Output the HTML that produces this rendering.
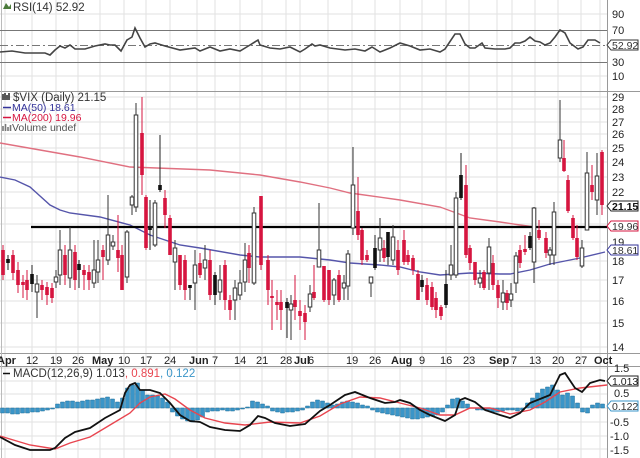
<!DOCTYPE html>
<html><head><meta charset="utf-8"><style>
html,body{margin:0;padding:0;background:#fff}
svg{display:block;font-family:"Liberation Sans",sans-serif}
.g line{stroke:#e2e2e2;stroke-width:1}
.ax{font-size:11px;fill:#222}
.r line{stroke:#d6153f;stroke-width:1}
.r rect{fill:#d6153f}
.w line{stroke:#333;stroke-width:1}
.w rect{fill:#fff;stroke:#333;stroke-width:1}
.b line{stroke:#222;stroke-width:1}
.b rect{fill:#111}
</style></head><body>
<svg width="640" height="458" viewBox="0 0 640 458" xmlns="http://www.w3.org/2000/svg">
<rect width="640" height="458" fill="#fff"/>
<!-- vertical grid -->
<g class="g">
<line x1="5" y1="0" x2="5" y2="458"/><line x1="32" y1="0" x2="32" y2="458"/><line x1="56" y1="0" x2="56" y2="458"/><line x1="78" y1="0" x2="78" y2="458"/><line x1="100" y1="0" x2="100" y2="458"/><line x1="124" y1="0" x2="124" y2="458"/><line x1="146" y1="0" x2="146" y2="458"/><line x1="170" y1="0" x2="170" y2="458"/><line x1="197" y1="0" x2="197" y2="458"/><line x1="215" y1="0" x2="215" y2="458"/><line x1="240" y1="0" x2="240" y2="458"/><line x1="262" y1="0" x2="262" y2="458"/><line x1="286" y1="0" x2="286" y2="458"/><line x1="300" y1="0" x2="300" y2="458"/><line x1="328" y1="0" x2="328" y2="458"/><line x1="352" y1="0" x2="352" y2="458"/><line x1="375" y1="0" x2="375" y2="458"/><line x1="400" y1="0" x2="400" y2="458"/><line x1="422" y1="0" x2="422" y2="458"/><line x1="446" y1="0" x2="446" y2="458"/><line x1="469" y1="0" x2="469" y2="458"/><line x1="497" y1="0" x2="497" y2="458"/><line x1="512" y1="0" x2="512" y2="458"/><line x1="535" y1="0" x2="535" y2="458"/><line x1="558" y1="0" x2="558" y2="458"/><line x1="581" y1="0" x2="581" y2="458"/><line x1="600" y1="0" x2="600" y2="458"/>
<!-- horizontal grid RSI -->
<line x1="0" y1="14" x2="607" y2="14"/><line x1="0" y1="76" x2="607" y2="76"/>
<!-- price -->
<line x1="0" y1="97" x2="607" y2="97"/><line x1="0" y1="109" x2="607" y2="109"/><line x1="0" y1="122" x2="607" y2="122"/><line x1="0" y1="134" x2="607" y2="134"/><line x1="0" y1="148" x2="607" y2="148"/><line x1="0" y1="162" x2="607" y2="162"/><line x1="0" y1="177" x2="607" y2="177"/><line x1="0" y1="192" x2="607" y2="192"/><line x1="0" y1="208" x2="607" y2="208"/><line x1="0" y1="224" x2="607" y2="224"/><line x1="0" y1="242" x2="607" y2="242"/><line x1="0" y1="261" x2="607" y2="261"/><line x1="0" y1="280" x2="607" y2="280"/><line x1="0" y1="301" x2="607" y2="301"/><line x1="0" y1="323" x2="607" y2="323"/><line x1="0" y1="347" x2="607" y2="347"/>
<!-- macd -->
<line x1="0" y1="368" x2="607" y2="368"/><line x1="0" y1="381" x2="607" y2="381"/><line x1="0" y1="394" x2="607" y2="394"/><line x1="0" y1="408" x2="607" y2="408"/><line x1="0" y1="422" x2="607" y2="422"/><line x1="0" y1="436" x2="607" y2="436"/><line x1="0" y1="449" x2="607" y2="449"/>
</g>
<!-- panel separators -->
<g stroke="#999" stroke-width="1">
<line x1="0" y1="91.5" x2="640" y2="91.5"/>
<line x1="0" y1="353.5" x2="640" y2="353.5"/>
<line x1="0" y1="366.5" x2="640" y2="366.5"/>
<line x1="607.5" y1="0" x2="607.5" y2="458"/>
<line x1="1.5" y1="0" x2="1.5" y2="458" stroke="#bbb"/>
</g>
<!-- RSI -->
<g stroke="#777" stroke-width="1">
<line x1="0" y1="30.5" x2="607" y2="30.5"/>
<line x1="0" y1="62.5" x2="607" y2="62.5"/>
<line x1="0" y1="45.5" x2="607" y2="45.5" stroke-dasharray="8,3,2,3"/>
</g>
<polyline fill="none" stroke="#444" stroke-width="1.6" points="0,52 12,51 25,53 45,53 50,55 55,50 60,46 65,48 70,45 75,49 85,49 95,46 105,44 110,45 115,45 121,51 127,40 132,37 135,28 140,38 145,47 150,44 155,43 165,46 180,50 195,48 200,51 210,47 220,51 230,49 240,51 250,45 258,40 260,45 270,48 280,49 290,47 300,52 305,49 312,44 315,46 320,45 330,48 345,50 355,49 365,51 372,47 380,52 390,48 400,43 410,46 420,50 430,49 440,52 445,49 455,34 460,34 465,44 470,48 475,48 482,43 485,48 495,49 505,49 510,48 515,43 520,43 525,41 530,37 535,41 540,42 545,45 550,43 555,37 560,30 565,33 570,43 578,49 583,47 588,40 595,40 600,43"/>
<g fill="#333" font-size="11" font-family="Liberation Sans,sans-serif">
<path d="M3 9 L6 3 L9 7 L11 4 V9 Z" fill="#4a7a3a"/>
<text x="13" y="11" font-size="11.5">RSI(14) 52.92</text>
</g>
<g class="ax">
<text x="612" y="18">90</text><text x="612" y="34">70</text><text x="612" y="66">30</text><text x="612" y="80">10</text>
</g>
<path d="M607 45 L611 40 H638 V50 H611 Z" fill="#fff" stroke="#333"/>
<text x="612" y="49" font-size="10.5" fill="#333">52.92</text>

<!-- MAs -->
<polyline fill="none" stroke="#e07080" stroke-width="1.4" points="0,143 40,150 80,157 130,167 210,170 260,175 300,182 330,188 350,193 400,200 440,207 470,218 500,222 520,225 535,227"/>
<polyline fill="none" stroke="#5555aa" stroke-width="1.4" points="0,177 15,180 30,187 40,196 50,205 60,210 70,213 100,217 130,225 150,235 165,240 180,245 200,248 240,255 260,257 300,257 330,260 350,263 380,265 400,267 420,272 440,275 470,273 500,274 510,274 530,270 550,264 580,258 605,252"/>
<!-- horizontal black line -->
<line x1="31" y1="227" x2="607" y2="227" stroke="#000" stroke-width="2.2"/>

<!-- candles -->
<g class="r">
<line x1="3" y1="245" x2="3" y2="280"/><rect x="1.2" y="250" width="3.6" height="25"/>
<line x1="13" y1="250" x2="13" y2="280"/><rect x="11.2" y="255" width="3.6" height="18"/>
<line x1="18" y1="262" x2="18" y2="293"/><rect x="16.2" y="270" width="3.6" height="15"/>
<line x1="23" y1="275" x2="23" y2="298"/><rect x="21.2" y="282" width="3.6" height="3"/>
<line x1="27" y1="270" x2="27" y2="300"/><rect x="25.2" y="280" width="3.6" height="10"/>
<line x1="42" y1="280" x2="42" y2="300"/><rect x="40.2" y="285" width="3.6" height="5"/>
<line x1="47" y1="282" x2="47" y2="305"/><rect x="45.2" y="287" width="3.6" height="8"/>
<line x1="52" y1="283" x2="52" y2="303"/><rect x="50.2" y="288" width="3.6" height="10"/>
<line x1="65" y1="245" x2="65" y2="285"/><rect x="63.2" y="255" width="3.6" height="20"/>
<line x1="75" y1="245" x2="75" y2="290"/><rect x="73.2" y="252" width="3.6" height="28"/>
<line x1="84" y1="265" x2="84" y2="290"/><rect x="82.2" y="270" width="3.6" height="5"/>
<line x1="89" y1="265" x2="89" y2="290"/><rect x="87.2" y="272" width="3.6" height="8"/>
<line x1="103" y1="245" x2="103" y2="280"/><rect x="101.2" y="250" width="3.6" height="7"/>
<line x1="118" y1="215" x2="118" y2="272"/><rect x="116.2" y="250" width="3.6" height="8"/>
<line x1="122" y1="245" x2="122" y2="290"/><rect x="120.2" y="255" width="3.6" height="35"/>
<line x1="142" y1="97" x2="142" y2="195"/><rect x="140.2" y="133" width="3.6" height="42"/>
<line x1="146" y1="195" x2="146" y2="250"/><rect x="144.2" y="197" width="3.6" height="51"/>
<line x1="165" y1="190" x2="165" y2="228"/><rect x="163.2" y="198" width="3.6" height="17"/>
<line x1="170" y1="215" x2="170" y2="255"/><rect x="168.2" y="218" width="3.6" height="37"/>
<line x1="180" y1="255" x2="180" y2="290"/><rect x="178.2" y="255" width="3.6" height="30"/>
<line x1="185" y1="255" x2="185" y2="300"/><rect x="183.2" y="260" width="3.6" height="30"/>
<line x1="200" y1="253" x2="200" y2="278"/><rect x="198.2" y="263" width="3.6" height="12"/>
<line x1="210" y1="250" x2="210" y2="300"/><rect x="208.2" y="260" width="3.6" height="35"/>
<line x1="225" y1="260" x2="225" y2="310"/><rect x="223.2" y="265" width="3.6" height="35"/>
<line x1="230" y1="295" x2="230" y2="320"/><rect x="228.2" y="300" width="3.6" height="10"/>
<line x1="249" y1="245" x2="249" y2="283"/><rect x="247.2" y="253" width="3.6" height="15"/>
<line x1="261" y1="196" x2="261" y2="270"/><rect x="259.2" y="196" width="3.6" height="69"/>
<line x1="268" y1="255" x2="268" y2="305"/><rect x="266.2" y="260" width="3.6" height="30"/>
<line x1="272" y1="280" x2="272" y2="330"/><rect x="270.2" y="296" width="3.6" height="2"/>
<line x1="277" y1="290" x2="277" y2="320"/><rect x="275.2" y="302" width="3.6" height="3"/>
<line x1="281" y1="290" x2="281" y2="330"/><rect x="279.2" y="302" width="3.6" height="8"/>
<line x1="295" y1="275" x2="295" y2="320"/><rect x="293.2" y="300" width="3.6" height="7"/>
<line x1="300" y1="300" x2="300" y2="330"/><rect x="298.2" y="311" width="3.6" height="5"/>
<line x1="305" y1="305" x2="305" y2="340"/><rect x="303.2" y="313" width="3.6" height="9"/>
<line x1="314" y1="265" x2="314" y2="300"/><rect x="312.2" y="292" width="3.6" height="6"/>
<line x1="324" y1="266" x2="324" y2="302"/><rect x="322.2" y="266" width="3.6" height="34"/>
<line x1="329" y1="270" x2="329" y2="305"/><rect x="327.2" y="270" width="3.6" height="30"/>
<line x1="339" y1="270" x2="339" y2="302"/><rect x="337.2" y="275" width="3.6" height="25"/>
<line x1="358" y1="177" x2="358" y2="240"/><rect x="356.2" y="211" width="3.6" height="24"/>
<line x1="362" y1="228" x2="362" y2="265"/><rect x="360.2" y="230" width="3.6" height="30"/>
<line x1="367" y1="250" x2="367" y2="262"/><rect x="365.2" y="255" width="3.6" height="5"/>
<line x1="384" y1="240" x2="384" y2="262"/><rect x="382.2" y="248" width="3.6" height="10"/>
<line x1="398" y1="240" x2="398" y2="275"/><rect x="396.2" y="250" width="3.6" height="20"/>
<line x1="404" y1="230" x2="404" y2="265"/><rect x="402.2" y="240" width="3.6" height="22"/>
<line x1="408" y1="250" x2="408" y2="265"/><rect x="406.2" y="255" width="3.6" height="7"/>
<line x1="413" y1="255" x2="413" y2="275"/><rect x="411.2" y="258" width="3.6" height="12"/>
<line x1="418" y1="270" x2="418" y2="300"/><rect x="416.2" y="274" width="3.6" height="26"/>
<line x1="427" y1="278" x2="427" y2="305"/><rect x="425.2" y="285" width="3.6" height="15"/>
<line x1="432" y1="282" x2="432" y2="310"/><rect x="430.2" y="287" width="3.6" height="20"/>
<line x1="436" y1="292" x2="436" y2="318"/><rect x="434.2" y="298" width="3.6" height="12"/>
<line x1="441" y1="305" x2="441" y2="320"/><rect x="439.2" y="307" width="3.6" height="9"/>
<line x1="466" y1="165" x2="466" y2="258"/><rect x="464.2" y="185" width="3.6" height="70"/>
<line x1="470" y1="245" x2="470" y2="270"/><rect x="468.2" y="248" width="3.6" height="15"/>
<line x1="475" y1="262" x2="475" y2="285"/><rect x="473.2" y="262" width="3.6" height="18"/>
<line x1="484" y1="270" x2="484" y2="290"/><rect x="482.2" y="272" width="3.6" height="16"/>
<line x1="493" y1="255" x2="493" y2="290"/><rect x="491.2" y="263" width="3.6" height="22"/>
<line x1="498" y1="280" x2="498" y2="308"/><rect x="496.2" y="285" width="3.6" height="13"/>
<line x1="507" y1="290" x2="507" y2="310"/><rect x="505.2" y="293" width="3.6" height="10"/>
<line x1="520" y1="245" x2="520" y2="268"/><rect x="518.2" y="250" width="3.6" height="13"/>
<line x1="525" y1="235" x2="525" y2="255"/><rect x="523.2" y="249" width="3.6" height="3"/>
<line x1="539" y1="220" x2="539" y2="240"/><rect x="537.2" y="230" width="3.6" height="8"/>
<line x1="546" y1="232" x2="546" y2="258"/><rect x="544.2" y="238" width="3.6" height="15"/>
<line x1="564" y1="140" x2="564" y2="172"/><rect x="562.2" y="158" width="3.6" height="13"/>
<line x1="568" y1="175" x2="568" y2="213"/><rect x="566.2" y="180" width="3.6" height="31"/>
<line x1="573" y1="215" x2="573" y2="240"/><rect x="571.2" y="218" width="3.6" height="20"/>
<line x1="577" y1="225" x2="577" y2="260"/><rect x="575.2" y="238" width="3.6" height="19"/>
<line x1="592" y1="165" x2="592" y2="200"/><rect x="590.2" y="185" width="3.6" height="7"/>
<line x1="602" y1="150" x2="602" y2="215"/><rect x="600.2" y="152" width="3.6" height="53"/>
</g>
<g class="w">
<line x1="37" y1="275" x2="37" y2="318"/><rect x="35.2" y="284" width="3.6" height="8"/>
<line x1="56" y1="270" x2="56" y2="288"/><rect x="54.2" y="277" width="3.6" height="5"/>
<line x1="60" y1="230" x2="60" y2="285"/><rect x="58.2" y="250" width="3.6" height="25"/>
<line x1="70" y1="227" x2="70" y2="288"/><rect x="68.2" y="250" width="3.6" height="28"/>
<line x1="94" y1="240" x2="94" y2="288"/><rect x="92.2" y="270" width="3.6" height="13"/>
<line x1="98" y1="240" x2="98" y2="283"/><rect x="96.2" y="260" width="3.6" height="12"/>
<line x1="108" y1="195" x2="108" y2="265"/><rect x="106.2" y="235" width="3.6" height="25"/>
<line x1="113" y1="235" x2="113" y2="250"/><rect x="111.2" y="242" width="3.6" height="4"/>
<line x1="127" y1="230" x2="127" y2="283"/><rect x="125.2" y="232" width="3.6" height="45"/>
<line x1="132" y1="195" x2="132" y2="215"/><rect x="130.2" y="197" width="3.6" height="8"/>
<line x1="136" y1="103" x2="136" y2="212"/><rect x="134.2" y="115" width="3.6" height="92"/>
<line x1="155" y1="200" x2="155" y2="247"/><rect x="153.2" y="203" width="3.6" height="42"/>
<line x1="175" y1="240" x2="175" y2="290"/><rect x="173.2" y="248" width="3.6" height="14"/>
<line x1="195" y1="250" x2="195" y2="310"/><rect x="193.2" y="265" width="3.6" height="18"/>
<line x1="205" y1="245" x2="205" y2="280"/><rect x="203.2" y="260" width="3.6" height="8"/>
<line x1="220" y1="265" x2="220" y2="300"/><rect x="218.2" y="280" width="3.6" height="12"/>
<line x1="235" y1="280" x2="235" y2="320"/><rect x="233.2" y="288" width="3.6" height="12"/>
<line x1="240" y1="270" x2="240" y2="300"/><rect x="238.2" y="283" width="3.6" height="12"/>
<line x1="245" y1="243" x2="245" y2="292"/><rect x="243.2" y="260" width="3.6" height="22"/>
<line x1="254" y1="207" x2="254" y2="285"/><rect x="252.2" y="213" width="3.6" height="70"/>
<line x1="291" y1="295" x2="291" y2="340"/><rect x="289.2" y="304" width="3.6" height="6"/>
<line x1="310" y1="285" x2="310" y2="312"/><rect x="308.2" y="294" width="3.6" height="13"/>
<line x1="319" y1="203" x2="319" y2="267"/><rect x="317.2" y="250" width="3.6" height="17"/>
<line x1="334" y1="278" x2="334" y2="305"/><rect x="332.2" y="280" width="3.6" height="15"/>
<line x1="344" y1="275" x2="344" y2="300"/><rect x="342.2" y="283" width="3.6" height="5"/>
<line x1="348" y1="250" x2="348" y2="300"/><rect x="346.2" y="254" width="3.6" height="32"/>
<line x1="353" y1="147" x2="353" y2="235"/><rect x="351.2" y="185" width="3.6" height="43"/>
<line x1="371" y1="277" x2="371" y2="297" stroke="#d6153f"/><rect x="369.2" y="277" width="3.6" height="6" stroke="#d6153f"/>
<line x1="380" y1="218" x2="380" y2="262"/><rect x="378.2" y="238" width="3.6" height="12"/>
<line x1="393" y1="225" x2="393" y2="265"/><rect x="391.2" y="237" width="3.6" height="23"/>
<line x1="451" y1="245" x2="451" y2="280"/><rect x="449.2" y="265" width="3.6" height="10"/>
<line x1="456" y1="192" x2="456" y2="278"/><rect x="454.2" y="198" width="3.6" height="77"/>
<line x1="480" y1="270" x2="480" y2="288"/><rect x="478.2" y="278" width="3.6" height="5"/>
<line x1="489" y1="238" x2="489" y2="290"/><rect x="487.2" y="247" width="3.6" height="26"/>
<line x1="503" y1="280" x2="503" y2="310"/><rect x="501.2" y="293" width="3.6" height="9"/>
<line x1="511" y1="283" x2="511" y2="307"/><rect x="509.2" y="294" width="3.6" height="6"/>
<line x1="516" y1="252" x2="516" y2="293"/><rect x="514.2" y="256" width="3.6" height="27"/>
<line x1="534" y1="207" x2="534" y2="283"/><rect x="532.2" y="208" width="3.6" height="54"/>
<line x1="550" y1="247" x2="550" y2="265"/><rect x="548.2" y="250" width="3.6" height="5"/>
<line x1="554" y1="202" x2="554" y2="265"/><rect x="552.2" y="212" width="3.6" height="43"/>
<line x1="560" y1="100" x2="560" y2="162"/><rect x="558.2" y="140" width="3.6" height="18"/>
<line x1="582" y1="240" x2="582" y2="268"/><rect x="580.2" y="248" width="3.6" height="18"/>
<line x1="587" y1="152" x2="587" y2="230"/><rect x="585.2" y="173" width="3.6" height="57"/>
<line x1="597" y1="153" x2="597" y2="215"/><rect x="595.2" y="176" width="3.6" height="24"/>
</g>
<g class="b">
<line x1="8" y1="255" x2="8" y2="270"/><rect x="6.2" y="259" width="3.6" height="4"/>
<line x1="32" y1="265" x2="32" y2="292"/><rect x="30.2" y="274" width="3.6" height="10"/>
<line x1="79" y1="260" x2="79" y2="288"/><rect x="77.2" y="264" width="3.6" height="6"/>
<line x1="150" y1="200" x2="150" y2="250"/><rect x="148.2" y="226" width="3.6" height="4"/>
<line x1="160" y1="135" x2="160" y2="192"/><rect x="158.2" y="185" width="3.6" height="5"/>
<line x1="190" y1="285" x2="190" y2="300"/><rect x="188.2" y="285" width="3.6" height="3"/>
<line x1="215" y1="272" x2="215" y2="305"/><rect x="213.2" y="275" width="3.6" height="20"/>
<line x1="287" y1="298" x2="287" y2="338"/><rect x="285.2" y="302" width="3.6" height="6"/>
<line x1="375" y1="235" x2="375" y2="270"/><rect x="373.2" y="248" width="3.6" height="20"/>
<line x1="388" y1="232" x2="388" y2="265"/><rect x="386.2" y="232" width="3.6" height="25"/>
<line x1="422" y1="275" x2="422" y2="292"/><rect x="420.2" y="280" width="3.6" height="7"/>
<line x1="446" y1="270" x2="446" y2="308"/><rect x="444.2" y="284" width="3.6" height="21"/>
<line x1="461" y1="153" x2="461" y2="200"/><rect x="459.2" y="175" width="3.6" height="23"/>
<line x1="530" y1="232" x2="530" y2="250"/><rect x="528.2" y="236" width="3.6" height="12"/>
</g>

<!-- price legend -->
<g font-size="11.5" fill="#333">
<path d="M3 94 v6 M5 93 v7 M7 95 v5 M9 93 v7" stroke="#222" stroke-width="1.5"/>
<text x="13" y="101">$VIX (Daily) 21.15</text>
<line x1="3" y1="107.5" x2="11" y2="107.5" stroke="#33339a" stroke-width="1.5"/>
<text x="12" y="111" fill="#33339a" font-size="10.5">MA(50) 18.61</text>
<line x1="3" y1="117.5" x2="11" y2="117.5" stroke="#d6153f" stroke-width="1.5"/>
<text x="12" y="121" fill="#d6153f" font-size="10.5">MA(200) 19.96</text>
<path d="M3 131 v-5 M5.5 131 v-7 M8 131 v-4 M10.5 131 v-6" stroke="#777" stroke-width="1.6"/>
<text x="12" y="131" fill="#555" font-size="10.5">Volume undef</text>
</g>
<!-- price axis -->
<g class="ax">
<text x="612" y="101">29</text><text x="612" y="113">28</text><text x="612" y="126">27</text><text x="612" y="138">26</text><text x="612" y="152">25</text><text x="612" y="166">24</text><text x="612" y="181">23</text><text x="612" y="196">22</text><text x="612" y="246">19</text><text x="612" y="265">18</text><text x="612" y="284">17</text><text x="612" y="305">16</text><text x="612" y="327">15</text><text x="612" y="351">14</text>
</g>
<path d="M607 206 L611 201 H638 V211 H611 Z" fill="#fff" stroke="#222"/>
<text x="612" y="210" font-size="10.5" font-weight="bold" fill="#111">21.15</text>
<path d="M607 226 L611 221 H638 V231 H611 Z" fill="#fff" stroke="#d6153f"/>
<text x="612" y="230" font-size="10.5" fill="#333">19.96</text>
<path d="M607 250 L611 245 H638 V255 H611 Z" fill="#fff" stroke="#33339a"/>
<text x="612" y="254" font-size="10.5" fill="#333">18.61</text>

<!-- date axis -->
<g font-size="11" fill="#222">
<text x="-3" y="364" font-weight="bold">Apr</text><text x="26" y="364">12</text><text x="50" y="364">19</text><text x="72" y="364">26</text><text x="92" y="364" font-weight="bold">May</text><text x="118" y="364">10</text><text x="140" y="364">17</text><text x="164" y="364">24</text><text x="189" y="364" font-weight="bold">Jun</text><text x="212" y="364">7</text><text x="234" y="364">14</text><text x="256" y="364">21</text><text x="280" y="364">28</text><text x="294" y="364" font-weight="bold">Jul</text><text x="308" y="364">6</text><text x="346" y="364">19</text><text x="369" y="364">26</text><text x="391" y="364" font-weight="bold">Aug</text><text x="419" y="364">9</text><text x="440" y="364">16</text><text x="463" y="364">23</text><text x="489" y="364" font-weight="bold">Sep</text><text x="511" y="364">7</text><text x="529" y="364">13</text><text x="552" y="364">20</text><text x="575" y="364">27</text><text x="594" y="364" font-weight="bold">Oct</text>
</g>

<!-- MACD histogram -->
<path fill="#3a95c8" stroke="#1f6f99" stroke-width="0.5" d="M0.5 408V413h4V408ZM5.5 408V413h4V408ZM10.5 408V414h4V408ZM15.5 408V414h4V408ZM20.5 408V413h4V408ZM25.5 408V413h4V408ZM30.5 408V412h4V408ZM35.5 408V412h4V408ZM40.5 408V411h4V408ZM45.5 408V410h4V408ZM50.5 408V409h4V408ZM55.5 408V404h4V408ZM60.5 408V402h4V408ZM65.5 408V401h4V408ZM70.5 408V401h4V408ZM75.5 408V402h4V408ZM80.5 408V401h4V408ZM85.5 408V400h4V408ZM90.5 408V400h4V408ZM95.5 408V399h4V408ZM100.5 408V398h4V408ZM105.5 408V397h4V408ZM110.5 408V399h4V408ZM115.5 408V402h4V408ZM120.5 408V398h4V408ZM125.5 408V388h4V408ZM130.5 408V385h4V408ZM135.5 408V383h4V408ZM140.5 408V390h4V408ZM145.5 408V395h4V408ZM150.5 408V395h4V408ZM155.5 408V396h4V408ZM160.5 408V398h4V408ZM165.5 408V402h4V408ZM170.5 408V412h4V408ZM175.5 408V416h4V408ZM180.5 408V419h4V408ZM185.5 408V421h4V408ZM190.5 408V422h4V408ZM195.5 408V420h4V408ZM200.5 408V417h4V408ZM205.5 408V412h4V408ZM210.5 408V411h4V408ZM215.5 408V411h4V408ZM220.5 408V410h4V408ZM225.5 408V411h4V408ZM230.5 408V411h4V408ZM235.5 408V410h4V408ZM240.5 408V409h4V408ZM245.5 408V407h4V408ZM250.5 408V401h4V408ZM255.5 408V402h4V408ZM260.5 408V404h4V408ZM265.5 408V406h4V408ZM270.5 408V411h4V408ZM275.5 408V412h4V408ZM280.5 408V413h4V408ZM285.5 408V412h4V408ZM290.5 408V412h4V408ZM295.5 408V411h4V408ZM300.5 408V410h4V408ZM305.5 408V406h4V408ZM310.5 408V402h4V408ZM315.5 408V400h4V408ZM320.5 408V401h4V408ZM325.5 408V403h4V408ZM330.5 408V405h4V408ZM335.5 408V404h4V408ZM340.5 408V402h4V408ZM345.5 408V401h4V408ZM350.5 408V402h4V408ZM355.5 408V403h4V408ZM360.5 408V405h4V408ZM365.5 408V406h4V408ZM370.5 408V410h4V408ZM375.5 408V412h4V408ZM380.5 408V413h4V408ZM385.5 408V414h4V408ZM390.5 408V415h4V408ZM395.5 408V416h4V408ZM400.5 408V417h4V408ZM405.5 408V418h4V408ZM410.5 408V419h4V408ZM415.5 408V419h4V408ZM420.5 408V418h4V408ZM425.5 408V417h4V408ZM430.5 408V416h4V408ZM435.5 408V415h4V408ZM440.5 408V412h4V408ZM445.5 408V405h4V408ZM450.5 408V399h4V408ZM455.5 408V398h4V408ZM460.5 408V401h4V408ZM465.5 408V404h4V408ZM470.5 408V408h4V408ZM475.5 408V410h4V408ZM480.5 408V410h4V408ZM485.5 408V411h4V408ZM490.5 408V412h4V408ZM495.5 408V412h4V408ZM500.5 408V411h4V408ZM505.5 408V410h4V408ZM510.5 408V410h4V408ZM515.5 408V411h4V408ZM520.5 408V410h4V408ZM525.5 408V403h4V408ZM530.5 408V398h4V408ZM535.5 408V393h4V408ZM540.5 408V389h4V408ZM545.5 408V387h4V408ZM550.5 408V385h4V408ZM555.5 408V390h4V408ZM560.5 408V395h4V408ZM565.5 408V393h4V408ZM570.5 408V396h4V408ZM575.5 408V403h4V408ZM580.5 408V412h4V408ZM585.5 408V413h4V408ZM590.5 408V405h4V408ZM595.5 408V403h4V408ZM600.5 408V404h4V408Z"/>
<polyline fill="none" stroke="#e8454f" stroke-width="1.4" points="0,436 30,445 55,449 70,443 90,437 110,425 130,413 140,403 150,397 165,394 175,399 190,410 205,418 225,423 245,425 270,422 300,423 320,416 340,404 360,397 380,398 400,403 420,408 440,415 455,415 470,408 490,408 510,414 530,410 545,402 560,392 580,388 607,385"/>
<polyline fill="none" stroke="#111" stroke-width="1.8" points="0,437 15,445 30,450 50,450 55,448 65,438 75,432 90,428 105,418 120,410 125,393 130,385 135,383 140,390 150,390 160,393 170,403 180,415 190,421 200,422 210,427 225,430 240,431 250,425 258,416 265,418 275,423 290,426 305,424 320,411 330,405 345,395 355,392 370,398 385,403 395,402 400,400 410,403 420,410 430,415 445,421 455,415 460,400 465,398 475,402 485,410 500,415 510,418 520,413 530,403 540,399 550,395 560,375 565,373 575,388 582,392 590,383 600,380 605,381"/>
<g font-size="11.5">
<line x1="3" y1="373.5" x2="10" y2="373.5" stroke="#111" stroke-width="1.5"/>
<text x="13" y="377" fill="#333">MACD(12,26,9) 1.013<tspan fill="#e8454f">, 0.891</tspan><tspan fill="#3a95c8">, 0.122</tspan></text>
</g>
<g class="ax">
<text x="614" y="372">1.5</text><text x="614" y="397">0.5</text><text x="610" y="426">-0.5</text><text x="610" y="440">-1.0</text><text x="610" y="454">-1.5</text>
</g>
<path d="M607 381 L611 376 H638 V386 H611 Z" fill="#fff" stroke="#222"/>
<text x="612" y="385" font-size="10.5" fill="#222">1.013</text>
<path d="M607 406 L611 401 H638 V411 H611 Z" fill="#fff" stroke="#3a95c8"/>
<text x="612" y="410" font-size="10.5" fill="#333">0.122</text>
</svg>
</body></html>
